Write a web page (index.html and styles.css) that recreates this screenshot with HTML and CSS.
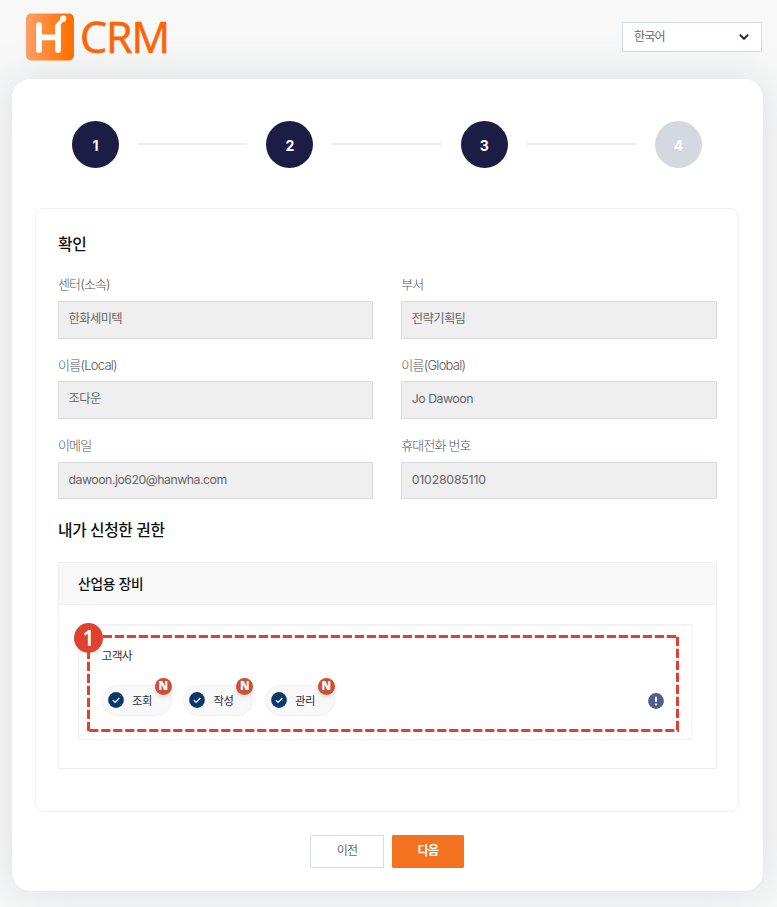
FILE: index.html
```html
<!DOCTYPE html>
<html lang="ko">
<head>
<meta charset="utf-8">
<title>CRM</title>
<link rel="stylesheet" href="styles.css">
</head>
<body>
<header class="top">
  <div class="logo">
    <svg width="50" height="49" viewBox="0 0 50 49">
      <defs><linearGradient id="lg" x1="0" x2="1" y1="0" y2="0"><stop offset="0" stop-color="#ff9f66"/><stop offset=".85" stop-color="#ff7505"/><stop offset="1" stop-color="#ff7000"/></linearGradient></defs>
      <rect x="1" y="1.5" width="48" height="47" rx="5" fill="url(#lg)"/>
      <path d="M14 13.2V38M33 38V14.5M14 25.4H33" fill="none" stroke="#fff" stroke-width="5.8" stroke-linecap="round"/>
      <path d="M32.6 13.2 37.6 7.4" stroke="#fff" stroke-width="3.6" stroke-linecap="round"/>
      <circle cx="38.2" cy="6.7" r="3.1" fill="#fff"/>
    </svg>
    <span class="logo-text">CRM</span>
  </div>
  <div class="lang"><span>한국어</span>
    <svg width="12" height="8" viewBox="0 0 12 8"><path d="M1.8 1.6 6 5.8 10.2 1.6" fill="none" stroke="#222b33" stroke-width="2"/></svg>
  </div>
</header>
<main class="card">
  <div class="steps">
    <span class="step">1</span><i class="bar"></i><span class="step">2</span><i class="bar"></i><span class="step">3</span><i class="bar"></i><span class="step off">4</span>
  </div>
  <section class="panel">
    <h2>확인</h2>
    <div class="fields">
      <div class="field"><label>센터(소속)</label><div class="input">한화세미텍</div></div>
      <div class="field"><label>부서</label><div class="input">전략기획팀</div></div>
      <div class="field"><label class="low">이름(Local)</label><div class="input">조다운</div></div>
      <div class="field"><label class="low">이름(Global)</label><div class="input latin">Jo Dawoon</div></div>
      <div class="field"><label>이메일</label><div class="input latin">dawoon.jo620@hanwha.com</div></div>
      <div class="field"><label>휴대전화 번호</label><div class="input digits">01028085110</div></div>
    </div>
    <h2 class="second">내가 신청한 권한</h2>
    <div class="perm">
      <div class="perm-head">산업용 장비</div>
      <div class="group">
        <div class="group-title">고객사</div>
        <div class="row">
          <div class="chip"><svg class="check" viewBox="0 0 16 16"><circle cx="8" cy="8" r="7.9" fill="#0a386c"/><path d="M4.8 8.1 7.1 10.3 11.3 6" fill="none" stroke="#fff" stroke-width="1.2"/></svg>조회<b class="new">N</b></div>
          <div class="chip"><svg class="check" viewBox="0 0 16 16"><circle cx="8" cy="8" r="7.9" fill="#0a386c"/><path d="M4.8 8.1 7.1 10.3 11.3 6" fill="none" stroke="#fff" stroke-width="1.2"/></svg>작성<b class="new">N</b></div>
          <div class="chip"><svg class="check" viewBox="0 0 16 16"><circle cx="8" cy="8" r="7.9" fill="#0a386c"/><path d="M4.8 8.1 7.1 10.3 11.3 6" fill="none" stroke="#fff" stroke-width="1.2"/></svg>관리<b class="new">N</b></div>
          <svg class="info" width="16" height="16" viewBox="0 0 16 16"><circle cx="8" cy="8" r="7.9" fill="#535d8b"/><path d="M8 3.8V8.8M8 10.5V12.3" stroke="#fff" stroke-width="1.9"/></svg>
        </div>
        <svg class="callout" width="594" height="99" viewBox="0 0 594 99">
          <g fill="none" stroke="#dd4330" stroke-width="3" stroke-dasharray="9.2 2.8">
            <path d="M4.8 2.5H592"/><path d="M591.5 2.8V97"/><path d="M3.2 96.5H593"/><path d="M2.5 3.8V97"/>
          </g>
        </svg>
        <span class="marker">1</span>
      </div>
    </div>
  </section>
  <div class="actions"><button class="btn">이전</button><button class="btn primary">다음</button></div>
</main>
</body>
</html>
```
FILE: styles.css
```css
* { box-sizing: border-box; }
body {
  margin: 0;
  height: 907px;
  overflow: hidden;
  background: #f8f8f8;
  font-family: Inter, "Noto Sans CJK KR", sans-serif;
  color: #111;
}
.top {
  display: flex;
  justify-content: space-between;
  align-items: flex-start;
  height: 79px;
  padding: 12px 15px 0 24.5px;
}
.logo { display: flex; gap: 5.5px; }
.logo-text {
  font: 400 43px/49px "Open Sans", sans-serif;
  letter-spacing: -1px;
  color: #ff6400;
  -webkit-text-stroke: 0.6px #ff6400;
}
.lang {
  display: flex;
  align-items: center;
  justify-content: space-between;
  width: 140px;
  height: 30px;
  margin-top: 10px;
  padding: 0 11px 0 11px;
  border: 1px solid #d5d9e0;
  border-radius: 1px;
  background: #fff;
  font-size: 12px;
  letter-spacing: -0.8px;
  color: #666;
}
.lang span { padding-bottom: 3px; }
.card {
  width: 751px;
  height: 812px;
  margin-left: 12px;
  padding: 42px 24px 0 23px;
  border-radius: 19px;
  background: #fff;
  box-shadow: 0 0 46px rgba(85, 98, 118, 0.18);
}
.steps {
  display: flex;
  align-items: center;
  gap: 19px;
  padding: 0 37px;
  height: 46px;
}
.step {
  width: 47px;
  height: 47px;
  border-radius: 50%;
  background: #1b1d44;
  color: #fff;
  font-size: 14px;
  font-weight: 700;
  line-height: 50px;
  text-align: center;
}
.step.off { background: #d4d9df; }
.bar { flex: 1; height: 2px; background: #ececee; }
.panel {
  height: 604px;
  margin-top: 41px;
  padding: 22px 21.5px 0 22px;
  border: 1px solid #f0f0f0;
  border-radius: 9px;
}
h2 {
  margin: 0;
  font-size: 15.8px;
  font-weight: 500;
  line-height: 27px;
  letter-spacing: -0.4px;
}
.fields {
  display: grid;
  grid-template-columns: 1fr 1fr;
  column-gap: 28px;
  margin-top: 17px;
}
.field { height: 80.4px; }
label {
  display: block;
  height: 26px;
  line-height: 19px;
  font-size: 13px;
  font-weight: 300;
  letter-spacing: -0.85px;
  color: #555;
}
.low { padding-top: 1px; letter-spacing: -0.75px; }
.input {
  height: 37.5px;
  padding-left: 9.5px;
  border: 1px solid #d7dae0;
  border-radius: 1px;
  background: #efefef;
  font-size: 12.3px;
  line-height: 34px;
  letter-spacing: -0.6px;
  color: #666;
}
.latin { letter-spacing: -0.48px; }
.digits { letter-spacing: -0.2px; }
.second { margin-top: 1px; }
.perm {
  height: 207px;
  margin-top: 18px;
  border: 1px solid #efefef;
}
.perm-head {
  height: 42px;
  padding-left: 19px;
  border-bottom: 1px solid #efefef;
  background: #f8f8f8;
  font-size: 13.7px;
  font-weight: 500;
  line-height: 42px;
  letter-spacing: -0.2px;
}
.group {
  position: relative;
  width: 614px;
  height: 116px;
  margin: 19px 0 0 19px;
  padding: 20px 27px 0 22.5px;
  border: 1px solid #f2f2f2;
  border-top-width: 2px;
}
.group-title {
  height: 39px;
  font-size: 11.8px;
  line-height: 20px;
  letter-spacing: -0.7px;
  color: #333;
}
.row { display: flex; align-items: center; gap: 11.5px; }
.chip {
  position: relative;
  display: flex;
  align-items: center;
  gap: 8.5px;
  width: 70px;
  height: 31px;
  padding: 0 0 1px 5px;
  border: 1px solid #f1f1f1;
  border-radius: 16px;
  background: #f8f8f8;
  font-size: 11.3px;
  letter-spacing: -0.5px;
  color: #252b4b;
}
.check { width: 16px; height: 16px; }
.new {
  position: absolute;
  top: -8px;
  right: -1px;
  width: 17px;
  height: 17px;
  border-radius: 50%;
  background: #cc4f38;
  box-shadow: 0 2px 4px rgba(0, 0, 0, 0.15);
  color: #fff;
  font: 800 11.5px/16px "Open Sans", sans-serif;
  text-align: center;
}
.info { margin-left: auto; }
.callout { position: absolute; left: 7px; top: 8px; }
.marker {
  position: absolute;
  left: -5px;
  top: -3px;
  width: 29px;
  height: 30px;
  border-radius: 50%;
  background: #dd4330;
  color: #fff;
  font: 600 21px/30px "Noto Sans", sans-serif;
  text-align: center;
}
.actions { display: flex; justify-content: center; gap: 8px; margin-top: 23px; }
.btn {
  width: 74px;
  height: 33px;
  padding: 0 0 4px;
  border: 1px solid #d5d9e0;
  border-radius: 1px;
  background: #fff;
  font: 400 12px "Noto Sans CJK KR", sans-serif;
  letter-spacing: -0.7px;
  color: #666;
}
.btn.primary { width: 72px; border-color: #f47321; background: #f47321; color: #fff; font-weight: 700; }
```
